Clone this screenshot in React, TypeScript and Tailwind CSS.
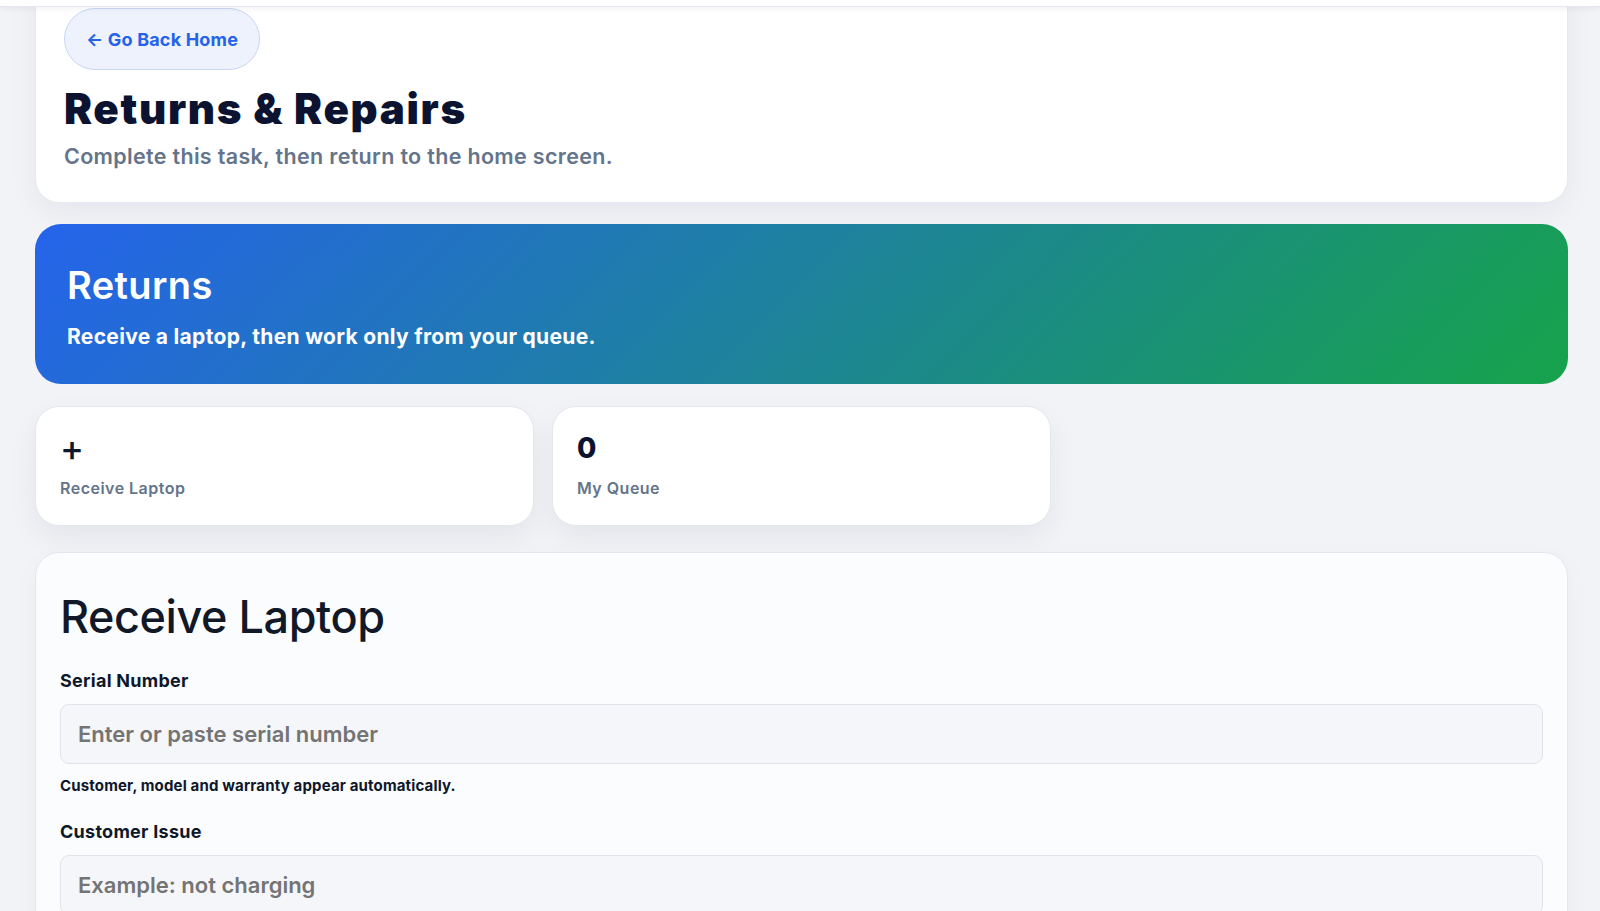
import React from "react";

const StatCard: React.FC<{ value: string; label: string; big?: boolean }> = ({
  value,
  label,
  big,
}) => (
  <div className="h-[120px] rounded-[24px] border border-[#e4e7ee] bg-white px-6 pt-6 shadow-[0_12px_30px_rgba(15,23,42,0.06)]">
    <div
      className={
        big
          ? "h-[34px] text-[36px] leading-[34px] font-medium text-[#0f172a]"
          : "h-[34px] text-[28px] leading-[34px] font-extrabold text-[#0b1330]"
      }
    >
      {value}
    </div>
    <div className="mt-3 text-[16px] leading-[22px] font-semibold tracking-[0.03em] text-[#64748b]">
      {label}
    </div>
  </div>
);

const App: React.FC = () => {
  return (
    <div className="min-h-screen overflow-hidden bg-[#f1f3f7] font-['Inter','Liberation_Sans',sans-serif]">
      {/* top bar, mostly scrolled away */}
      <div className="relative z-10 h-[7px] border-b border-[#e4e7ee] bg-white shadow-[0_2px_6px_rgba(15,23,42,0.05)]" />

      <main className="flex flex-col pl-[35px] pr-[32px] pb-12">
        {/* page header */}
        <section className="-mt-[40px] rounded-b-[24px] border border-[#e6e9ef] bg-white px-[28px] pt-[40px] pb-[31px] shadow-[0_10px_30px_rgba(15,23,42,0.05)]">
          <button
            type="button"
            className="inline-flex h-[62px] items-center rounded-full border border-[#c9d6f4] bg-[#eef2fc] px-[21px] text-[18px] font-bold tracking-[0.01em] text-[#2563eb]"
          >
            ← Go Back Home
          </button>
          <h1 className="mt-[15px] text-[42px] leading-[48px] font-black tracking-[0.04em] text-[#0b1330]">
            Returns &amp; Repairs
          </h1>
          <p className="mt-2 text-[21.5px] leading-[30px] font-semibold tracking-[0.015em] text-[#64748b]">
            Complete this task, then return to the home screen.
          </p>
        </section>

        {/* banner */}
        <section className="mt-[21px] h-[160px] rounded-[26px] bg-[linear-gradient(135deg,#2563eb,#16a34a)] px-8 pt-[38px] text-white">
          <h2 className="text-[38px] leading-[46px] font-semibold tracking-[0.01em]">Returns</h2>
          <p className="mt-[15px] text-[21px] leading-[28px] font-bold tracking-[0.015em]">
            Receive a laptop, then work only from your queue.
          </p>
        </section>

        {/* quick actions */}
        <div className="mt-[22px] grid grid-cols-3 gap-[18px]">
          <StatCard value="+" label="Receive Laptop" big />
          <StatCard value="0" label="My Queue" />
        </div>

        {/* receive form */}
        <section className="mt-[26px] rounded-[24px] border border-[#e3e6ec] bg-[#fbfcfe] px-6 pt-[37px] pb-10 shadow-[0_10px_30px_rgba(15,23,42,0.03)]">
          <h2 className="mb-[26px] text-[45px] leading-[53px] font-medium tracking-[-0.01em] text-[#111827]">
            Receive Laptop
          </h2>

          <label className="mb-[11px] block text-[18px] leading-6 font-bold tracking-[0.015em] text-[#0f172a]">
            Serial Number
          </label>
          <input
            type="text"
            placeholder="Enter or paste serial number"
            className="block h-[60px] w-full rounded-[9px] border border-[#e1e4ea] bg-[#f5f6f9] px-[17px] text-[22px] font-semibold text-[#0f172a] outline-none placeholder:text-[#747474]"
          />
          <p className="mt-3 text-[15px] leading-5 font-bold tracking-[0.01em] text-[#0f172a]">
            Customer, model and warranty appear automatically.
          </p>

          <label className="mt-6 mb-[11px] block text-[18px] leading-6 font-bold tracking-[0.015em] text-[#0f172a]">
            Customer Issue
          </label>
          <input
            type="text"
            placeholder="Example: not charging"
            className="block h-[60px] w-full rounded-[9px] border border-[#e1e4ea] bg-[#f5f6f9] px-[17px] text-[22px] font-semibold text-[#0f172a] outline-none placeholder:text-[#747474]"
          />
        </section>
      </main>
    </div>
  );
};

export default App;
